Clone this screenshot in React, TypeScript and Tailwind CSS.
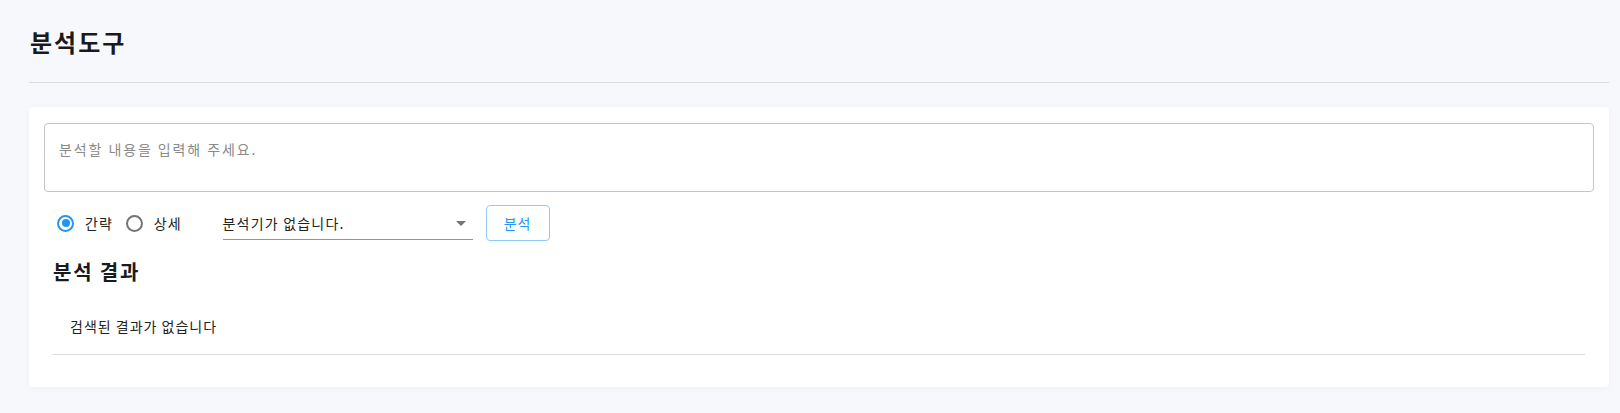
import { useState } from "react";

const Radio = ({ checked, label, onClick }: { checked: boolean; label: string; onClick: () => void }) => (
  <button type="button" onClick={onClick} className="flex items-center gap-[11px] text-sm tracking-[1px] text-[#222]">
    <span
      className={`w-[17px] h-[17px] rounded-full border-2 flex items-center justify-center ${
        checked ? "border-[#2196f3]" : "border-[#757575]"
      }`}
    >
      {checked && <span className="w-[8px] h-[8px] rounded-full bg-[#2196f3]" />}
    </span>
    <span className="leading-5">{label}</span>
  </button>
);

export default function App() {
  const [mode, setMode] = useState<"brief" | "detail">("brief");

  return (
    <div className="min-h-screen bg-[#f7f8fb] pl-[29px] pr-[11px] font-['Noto_Sans_CJK_KR','Noto_Sans',sans-serif]">
      {/* header */}
      <div className="pt-[24px] pb-[22px] border-b border-[#dcdcdf]">
        <h1 className="text-2xl leading-[36px] font-bold tracking-[2px] text-[#1a1a1a] pl-px">분석도구</h1>
      </div>

      {/* card */}
      <div className="mt-6 bg-white rounded shadow-[0_1px_6px_rgba(0,0,0,0.04)] px-[15px] pt-4 pb-8">
        <textarea
          placeholder="분석할 내용을 입력해 주세요."
          className="block w-full h-[69px] resize-none rounded border border-[#c4c4c4] px-[14px] pt-[15px] text-sm leading-5 tracking-[1.9px] text-[#222] placeholder:text-[#8a8a8a] outline-none"
        />

        <div className="mt-[13px] h-[36px] flex items-center pl-[13px]">
          <Radio checked={mode === "brief"} label="간략" onClick={() => setMode("brief")} />
          <div className="ml-[13px]">
            <Radio checked={mode === "detail"} label="상세" onClick={() => setMode("detail")} />
          </div>

          <div className="ml-[41px] w-[250px] h-[32px] mt-[1px] flex items-center justify-between border-b border-[#949494] text-sm text-[#222]">
            <span className="leading-5 tracking-[1.2px]">분석기가 없습니다.</span>
            <span className="mr-[7px] w-0 h-0 border-l-[5px] border-r-[5px] border-t-[5px] border-l-transparent border-r-transparent border-t-[#757575]" />
          </div>

          <button
            type="button"
            className="ml-[13px] w-[64px] h-[36px] rounded border border-[#90caf9] text-sm tracking-[1px] text-[#2196f3] flex items-center justify-center"
          >
            분석
          </button>
        </div>

        <div className="px-[9px]">
          <h2 className="mt-[16px] text-xl leading-[30px] font-bold tracking-[1.8px] text-[#1a1a1a]">분석 결과</h2>
          <div className="pt-[29px] pb-[18px] pl-[17px] text-sm leading-5 tracking-[1px] text-[#222] border-b border-[#dcdcdc]">
            검색된 결과가 없습니다
          </div>
        </div>
      </div>
    </div>
  );
}
